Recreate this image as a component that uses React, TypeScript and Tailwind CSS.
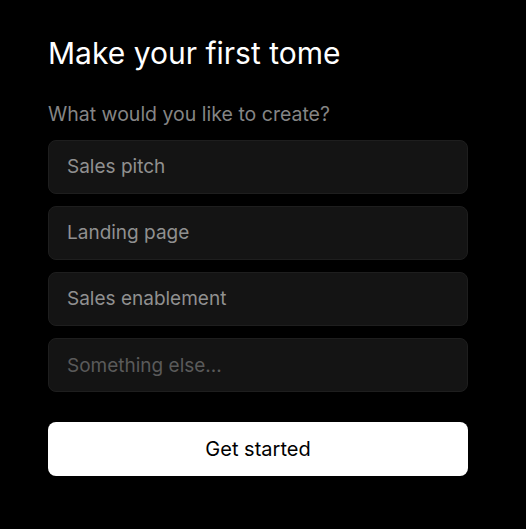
import { useState } from 'react';

const options = ['Sales pitch', 'Landing page', 'Sales enablement'];

export default function App() {
  const [other, setOther] = useState('');

  return (
    <div className="min-h-screen bg-black font-['Inter',sans-serif]">
      <div className="w-[468px] pl-12 pt-[34px]">
        <h1 className="text-[30px] leading-[38px] text-white">Make your first tome</h1>
        <p className="mt-7 text-[19.5px] leading-[28px] text-[#858585]">What would you like to create?</p>

        <div className="mt-3 flex flex-col gap-3">
          {options.map((label) => (
            <button
              key={label}
              type="button"
              className="h-[54px] rounded-lg border border-[#1e1e1e] bg-[#141414] px-[18px] text-left text-[19px] text-[#909090]"
            >
              {label}
            </button>
          ))}
          <input
            type="text"
            value={other}
            onChange={(e) => setOther(e.target.value)}
            placeholder="Something else..."
            className="h-[54px] rounded-lg border border-[#1e1e1e] bg-[#141414] px-[18px] text-[19px] text-[#909090] outline-none placeholder:text-[#5a5a5a]"
          />
        </div>

        <button
          type="button"
          className="mt-[30px] h-[54px] w-full rounded-lg bg-white text-[20px] text-black"
        >
          Get started
        </button>
      </div>
    </div>
  );
}
